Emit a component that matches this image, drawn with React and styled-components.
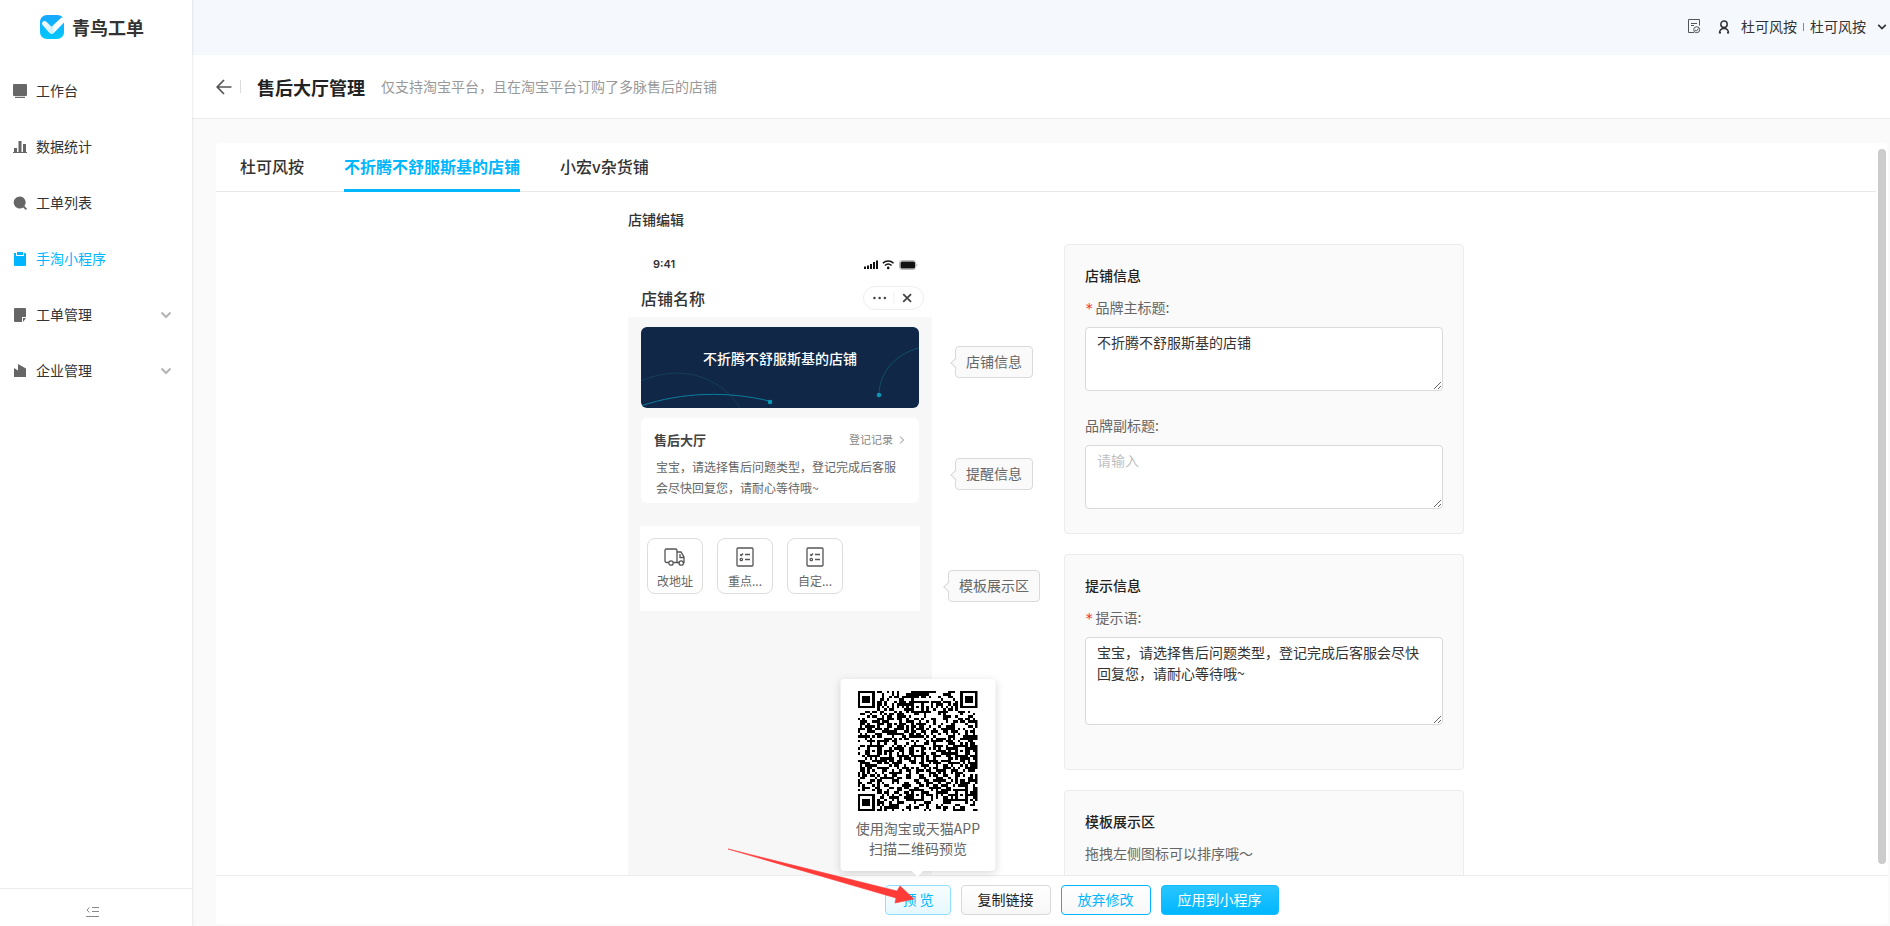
import React from 'react';
import styled, { createGlobalStyle, css } from 'styled-components';

const GlobalStyle = createGlobalStyle`
  * {
    box-sizing: border-box;
  }
  body {
    margin: 0;
    font-family: "Noto Sans CJK SC", "Noto Sans", sans-serif;
    font-size: 14px;
    line-height: 21px;
    color: #333;
    background: #fafafa;
  }
  button, textarea {
    font-family: inherit;
  }
  h1, h2, h3, p {
    margin: 0;
  }
`;

/* ---------- layout ---------- */

const Layout = styled.div`
  display: flex;
  height: 100vh;
  overflow: hidden;
`;

const Sidebar = styled.aside`
  display: flex;
  flex-direction: column;
  flex: 0 0 192px;
  background: #fff;
  box-shadow: 1px 0 2px rgba(0, 0, 0, 0.08);
  z-index: 1;
`;

const Main = styled.main`
  display: flex;
  flex-direction: column;
  flex: 1;
  min-width: 0;
`;

/* ---------- sidebar ---------- */

const Brand = styled.div`
  display: flex;
  align-items: center;
  gap: 8px;
  height: 54px;
  padding-left: 40px;
  font-size: 18px;
  font-weight: 600;
`;

const Menu = styled.nav`
  display: flex;
  flex-direction: column;
  flex: 1;
  padding-top: 9px;
`;

const MenuItem = styled.a`
  display: flex;
  align-items: center;
  gap: 8px;
  height: 56px;
  padding: 0 20px 0 13px;
  color: ${props => (props.$active ? '#00b7ff' : '#333')};
  text-decoration: none;

  svg {
    color: ${props => (props.$active ? '#00b7ff' : '#666')};
  }
  svg:last-child {
    color: #b4b4b4;
  }
`;

const MenuText = styled.span`
  flex: 1;
  padding-bottom: 2px;
`;

const Collapse = styled.button`
  display: flex;
  justify-content: center;
  height: 38px;
  padding: 17px 8px 0 0;
  border: 0;
  border-top: 1px solid #ececec;
  background: #fff;
  color: #888;
`;

/* ---------- header ---------- */

const TopBar = styled.header`
  display: flex;
  align-items: center;
  justify-content: flex-end;
  flex: 0 0 55px;
  padding: 0 3px 2px 0;
  background: #f5f9fd;
  color: #333;
`;

const IconButton = styled.button`
  display: flex;
  padding: 0;
  margin-right: ${props => props.$space || 0}px;
  border: 0;
  background: none;
  color: ${props => props.$color || '#555'};
`;

const UserSplit = styled.span`
  width: 1px;
  height: 8px;
  margin: 0 6px;
  background: #888;
`;

const UserName = styled.span`
  margin-right: ${props => (props.$last ? 11 : 0)}px;
`;

const PageHead = styled.div`
  display: flex;
  align-items: center;
  flex: 0 0 64px;
  padding-left: 24px;
  background: #fff;
  border-bottom: 1px solid #ebebeb;
`;

const HeadSplit = styled.span`
  width: 1px;
  height: 13px;
  margin-right: 16px;
  background: #ddd;
`;

const PageTitle = styled.h1`
  font-size: 18px;
  font-weight: 600;
  line-height: 24px;
  color: #222;
`;

const PageHint = styled.span`
  margin-left: 16px;
  color: #999;
`;

/* ---------- card ---------- */

const Card = styled.section`
  display: flex;
  flex-direction: column;
  flex: 1;
  min-height: 0;
  margin: 24px 2px 2px 24px;
  background: #fff;
  border-radius: 4px;
`;

const CardBody = styled.div`
  display: flex;
  flex: 1;
  min-height: 0;
`;

const ScrollArea = styled.div`
  display: flex;
  flex-direction: column;
  flex: 1;
  min-width: 0;
  overflow: hidden;
`;

const Rail = styled.div`
  flex: 0 0 12px;
  padding: 6px 2px 11px;
`;

const Thumb = styled.div`
  height: 100%;
  border-radius: 4px;
  background: #ccc;
`;

const Tabs = styled.div`
  display: flex;
  gap: 40px;
  flex: 0 0 49px;
  padding-left: 24px;
  border-bottom: 1px solid #e8e8e8;
`;

const Tab = styled.button`
  height: 49px;
  margin: 0 0 -1px;
  padding: 0;
  border: 0;
  border-bottom: 3px solid ${props => (props.$active ? '#00b7ff' : 'transparent')};
  background: none;
  font-size: 16px;
  font-weight: ${props => (props.$active ? 600 : 500)};
  color: ${props => (props.$active ? '#00b7ff' : '#333')};
`;

const Editor = styled.div`
  display: grid;
  grid-template-columns: 304px 124px 408px;
  justify-content: center;
  align-items: start;
  padding-top: 17px;
  row-gap: 14px;
`;

const EditorTitle = styled.h2`
  grid-column: 1 / -1;
  font-size: 14px;
  font-weight: 500;
`;

/* ---------- phone ---------- */

const Phone = styled.div`
  height: 760px;
  background: #f7f7f7;
`;

const PhoneHead = styled.div`
  height: 73px;
  padding: 10px 8px 0 13px;
  background: #fff;
`;

const StatusBar = styled.div`
  display: flex;
  align-items: center;
  justify-content: space-between;
  padding: 0 6px 0 12px;
  font-family: Inter, sans-serif;
  font-size: 11px;
  font-weight: 600;
`;

const NavBar = styled.div`
  display: flex;
  align-items: center;
  justify-content: space-between;
  margin-top: 11px;
  font-size: 16px;
  font-weight: 500;
`;

const Capsule = styled.div`
  display: flex;
  align-items: center;
  justify-content: space-between;
  width: 61px;
  height: 24px;
  padding: 0 10px 0 8px;
  border: 1px solid #eee;
  border-radius: 12px;
`;

const Hero = styled.div`
  position: relative;
  height: 81px;
  margin: 10px 13px 0;
  padding-top: 21px;
  border-radius: 6px;
  background: #102747;
  overflow: hidden;
  color: #fff;
  font-weight: 500;
  text-align: center;
`;

const HeroLines = styled.svg`
  position: absolute;
  left: 0;
  top: 0;
`;

const HallCard = styled.div`
  height: 85px;
  margin: 10px 13px 0;
  padding: 11px 14px 0 13px;
  border-radius: 6px;
  background: #fff;
`;

const HallHead = styled.div`
  display: flex;
  align-items: center;
`;

const HallTitle = styled.h3`
  flex: 1;
  font-size: 13px;
  font-weight: 600;
  color: #444;
`;

const HallLink = styled.a`
  display: flex;
  align-items: center;
  gap: 6px;
  color: #888;
  font-size: 11px;
  text-decoration: none;
`;

const HallText = styled.p`
  width: 244px;
  margin-top: 6px;
  padding-left: 2px;
  color: #666;
  font-size: 12px;
`;

const Tiles = styled.div`
  display: flex;
  gap: 14px;
  height: 85px;
  margin: 23px 12px 0;
  padding: 12px 7px;
  background: #fff;
`;

const Tile = styled.button`
  display: flex;
  flex-direction: column;
  align-items: center;
  justify-content: space-between;
  width: 56px;
  height: 56px;
  padding: 8px 2px 2px;
  border: 1px solid #ddd;
  border-radius: 8px;
  background: #fff;
  color: #666;
  font-size: 12px;
  line-height: 20px;
`;

/* ---------- labels between phone and forms ---------- */

const Marks = styled.div`
  display: flex;
  flex-direction: column;
  align-items: center;
  gap: 80px;
  padding-top: 102px;
`;

const Mark = styled.span`
  position: relative;
  height: 32px;
  padding: 0 10px;
  border: 1px solid #d9d9d9;
  border-radius: 4px;
  background: #fafafa;
  color: #666;
  line-height: 28px;

  &::before {
    content: '';
    position: absolute;
    left: -4px;
    top: 12px;
    width: 7px;
    height: 7px;
    border-left: 1px solid #d9d9d9;
    border-bottom: 1px solid #d9d9d9;
    background: #fafafa;
    transform: rotate(45deg);
  }
`;

/* ---------- forms ---------- */

const Forms = styled.div`
  display: flex;
  flex-direction: column;
  gap: 20px;
  margin-left: 8px;
`;

const Panel = styled.section`
  padding: 20px 20px 0;
  border: 1px solid #ececec;
  border-radius: 4px;
  background: #fafafa;
  min-height: ${props => props.$min || 0}px;
`;

const PanelTitle = styled.h3`
  margin-bottom: 12px;
  font-size: 14px;
  font-weight: 500;
  line-height: 20px;
  color: #222;
`;

const Field = styled.div`
  display: flex;
  flex-direction: column;
  gap: 10px;
  margin-bottom: 24px;
`;

const Label = styled.label`
  color: #666;
  line-height: 20px;

  ${props =>
    props.$required &&
    css`
      &::before {
        content: '*';
        margin-right: 2px;
        color: #f5222d;
        font-family: "DejaVu Sans Mono", monospace;
        line-height: 1;
      }
    `}
`;

const TextArea = styled.textarea`
  display: block;
  width: 100%;
  height: ${props => props.$height || 64}px;
  padding: 4px 11px;
  border: 1px solid #d9d9d9;
  border-radius: 4px;
  background: #fff;
  color: #333;
  font-size: 14px;
  line-height: 21px;
  resize: vertical;
  outline: none;

  &::placeholder {
    color: #bfbfbf;
  }
`;

const PanelText = styled.p`
  color: #666;
  line-height: 20px;
`;

/* ---------- footer ---------- */

const Footer = styled.footer`
  display: flex;
  align-items: flex-start;
  justify-content: center;
  gap: 10px;
  flex: 0 0 49px;
  padding: 9px 0 0 60px;
  border-top: 1px solid #ececec;
`;

const looks = {
  plain: css`
    border-color: #d9d9d9;
    background: linear-gradient(#fff, #f7f7f7);
    color: #222;
  `,
  hover: css`
    border-color: #8fdfff;
    background: linear-gradient(#f8fdff, #e6f8ff);
    color: #00b7ff;
  `,
  outline: css`
    border-color: #00b7ff;
    background: linear-gradient(#fff, #f7f7f7);
    color: #00b7ff;
  `,
  primary: css`
    border-color: #0fbcff;
    background: linear-gradient(#29c5ff, #00b7ff);
    color: #fff;
  `,
};

const Button = styled.button`
  height: 30px;
  padding: 0 16px 2px;
  border: 1px solid;
  border-radius: 4px;
  font-size: 14px;
  line-height: 20px;
  ${props => looks[props.$look]}
`;

const PreviewWrap = styled.div`
  position: relative;
  display: flex;
`;

const Popover = styled.div`
  position: absolute;
  left: 50%;
  bottom: 44px;
  display: flex;
  flex-direction: column;
  align-items: center;
  gap: 7px;
  width: 155px;
  height: 192px;
  padding-top: 12px;
  border-radius: 4px;
  background: #fff;
  box-shadow: 0 2px 8px rgba(0, 0, 0, 0.15);
  color: #666;
  line-height: 20px;
  text-align: center;
  transform: translateX(-50%);

  &::after {
    content: '';
    position: absolute;
    left: 50%;
    bottom: -4px;
    width: 8px;
    height: 8px;
    background: #fff;
    transform: translateX(-50%) rotate(45deg);
  }
`;

const Pointer = styled.svg`
  position: absolute;
  left: -158px;
  top: -37px;
  pointer-events: none;
`;

/* ---------- drawings ---------- */

const Logo = () => (
  <svg width="24" height="24" viewBox="0 0 24 24">
    <defs>
      <linearGradient id="logoBg" x1="0" y1="0" x2="0" y2="1">
        <stop offset="0" stopColor="#17a7ff" />
        <stop offset="1" stopColor="#00c8ff" />
      </linearGradient>
      <linearGradient id="logoTick" x1="0" y1="0" x2="1" y2="0">
        <stop offset="0" stopColor="#fff" />
        <stop offset="0.45" stopColor="#c9f0ff" />
        <stop offset="0.6" stopColor="#fff" />
      </linearGradient>
    </defs>
    <path d="M7 0h10c3 0 5 1 6 3l1 4v10c0 4-3 7-7 7H7c-4 0-7-3-7-7V7c0-4 3-7 7-7z" fill="url(#logoBg)" />
    <path d="M2.4 7.2c1-1.4 2.800-1.600 4-.4l5.200 5L21.500 2.600 24 3v4.500L13.800 18c-1.300 1.300-3 1.300-4.300 0L3 10.500c-.9-1-1.200-2.200-.6-3.300z" fill="url(#logoTick)" />
  </svg>
);

const menuShapes = {
  desk: <path d="M1 0h12a1 1 0 0 1 1 1v10a1 1 0 0 1-1 1H1a1 1 0 0 1-1-1V1a1 1 0 0 1 1-1zM2 12.800h10V14H2z" />,
  chart: <path d="M1 8h3v4H1zM5.500 1h3v11h-3zM10 4h3v8h-3zM0 12h14v1H0z" />,
  search: <path d="M6.500 0.500a6 6 0 0 1 4.900 9.600l2.600 2.700-1.200 1.200-2.600-2.600A6 6 0 1 1 6.500.5z" />,
  clip: <path d="M1 1h2v3h8V1h1a1 1 0 0 1 1 1v11a1 1 0 0 1-1 1H2a1 1 0 0 1-1-1zM4 0h6v3H4z" />,
  note: <path d="M2 0h10a1 1 0 0 1 1 1v8H9v5H2a1 1 0 0 1-1-1V1a1 1 0 0 1 1-1zM10 10h3l-3 4z" />,
  company: <path d="M1 4l4 2.500V0l8 4.500V13H1z" />,
};

const MenuIcon = ({ name }) => (
  <svg width="15" height="14" viewBox="0 0 15 14" fill="currentColor">
    {menuShapes[name]}
  </svg>
);

const Chevron = ({ size = 12, width = 2 }) => (
  <svg width={size} height={size} viewBox="0 0 12 12" fill="none" stroke="currentColor" strokeWidth={width}>
    <path d="M1.500 3.500L6 8l4.500-4.500" />
  </svg>
);

const RecordIcon = () => (
  <svg width="13" height="15" viewBox="0 0 13 15" fill="none" stroke="currentColor">
    <path d="M6 13.500H.5V.5h11v6M3 4.500h6M3 6.500h3" />
    <circle cx="8.700" cy="10.700" r="3" />
    <path d="M7 11l1.500 1 2-2.500" />
  </svg>
);

const UserIcon = () => (
  <svg width="12" height="14" viewBox="0 0 12 14" fill="none" stroke="currentColor" strokeWidth="1.500">
    <circle cx="6" cy="4.200" r="3.200" />
    <path d="M1.500 13.500c0-2.800 1.700-5 4.500-5s4.500 2.200 4.500 5M1 12.700h2M9 12.700h2" />
  </svg>
);

const BackIcon = () => (
  <svg width="16" height="16" viewBox="0 0 16 16" fill="none" stroke="currentColor" strokeWidth="1.700">
    <path d="M15.500 8H1.500M8 1L1.200 8 8 15" />
  </svg>
);

const FoldIcon = () => (
  <svg width="13" height="12" viewBox="0 0 13 12" fill="none" stroke="currentColor">
    <path d="M6 1.500h7M6 5.500h7M0 10.500h13" />
    <path d="M3.500 1.500L1 4l2.500 2.500" />
  </svg>
);

const StatusIcons = () => (
  <svg width="54" height="10" viewBox="0 0 54 10" fill="#111">
    <path d="M0 6.500h2V9H0zM3 5.500h2V9H3zM6 4h2v5H6zM9 2h2v7H9zM12 .5h2V9h-2z" />
    <g fill="none" stroke="#111" strokeWidth="1.400">
      <path d="M18.800 3.300c3-3 7.800-3 10.800 0M20.900 5.500c2-1.800 4.700-1.800 6.700 0" />
    </g>
    <circle cx="24.200" cy="7.900" r="1.300" />
    <rect x="35.500" y=".5" width="16" height="9" rx="2.500" fill="none" stroke="#bbb" />
    <rect x="36.500" y="1.500" width="14.500" height="7" rx="1.500" />
    <path d="M52.500 3.500c1.200.5 1.200 2.500 0 3z" fill="#aaa" />
  </svg>
);

const CapsuleIcons = () => (
  <svg width="42" height="12" viewBox="0 0 42 12" fill="#444">
    <circle cx="2.500" cy="6" r="1.300" />
    <circle cx="7.800" cy="6" r="1.300" />
    <circle cx="13.200" cy="6" r="1.300" />
    <path d="M22.500 0v12" stroke="#eee" />
    <path d="M32 2l8 8M40 2l-8 8" stroke="#444" strokeWidth="1.800" />
  </svg>
);

const TruckIcon = () => (
  <svg width="22" height="20" viewBox="0 0 22 20" fill="none" stroke="#555" strokeWidth="1.300">
    <path d="M4.500 15.500H2.500a1.500 1.500 0 0 1-1.500-1.500V3.500A1.500 1.500 0 0 1 2.500 2h9A1.500 1.500 0 0 1 13 3.500v12H9.500" />
    <path d="M13 5h4l3 5v5.500h-1M15.500 15.500H13M16 7v3.500h4.500" />
    <circle cx="7" cy="16" r="2.200" />
    <circle cx="17.200" cy="16" r="2.200" />
  </svg>
);

const FormIcon = () => (
  <svg width="18" height="20" viewBox="0 0 18 20" fill="none" stroke="#555" strokeWidth="1.300">
    <rect x="1" y="1" width="16" height="18" rx="1" />
    <path d="M4 7.500l1.200 1L7 6.500M9 7.500h5M9 12.500h5" />
    <circle cx="5.300" cy="12.500" r="1.200" />
  </svg>
);

const QR_SIZE = 49;
const ALIGN = [6, 24, 42];

// true/false for fixed patterns, null for data modules
const fixedModule = (x, y) => {
  const corners = [[0, 0], [QR_SIZE - 7, 0], [0, QR_SIZE - 7]];
  for (const [cx, cy] of corners) {
    const d = Math.max(Math.abs(x - cx - 3), Math.abs(y - cy - 3));
    if (d <= 4) return d !== 2 && d !== 4;
  }
  for (const ax of ALIGN) {
    for (const ay of ALIGN) {
      const d = Math.max(Math.abs(x - ax), Math.abs(y - ay));
      const corner = (ax === 6 && ay !== 24) || (ay === 6 && ax === 42);
      if (!corner && d <= 2) return d !== 1;
    }
  }
  if (x === 6 || y === 6) return (x + y) % 2 === 0;
  return null;
};

const buildQr = () => {
  let seed = 20517;
  let d = '';
  for (let y = 0; y < QR_SIZE; y++) {
    for (let x = 0; x < QR_SIZE; x++) {
      seed = (seed * 1103515 + 12345) % 2147483647;
      const fixed = fixedModule(x, y);
      if (fixed === null ? seed % 1000 < 500 : fixed) d += `M${x} ${y}h1v1h-1z`;
    }
  }
  return d;
};

const qrPath = buildQr();

const QrCode = () => (
  <svg width="120" height="120" viewBox={`0 0 ${QR_SIZE} ${QR_SIZE}`} shapeRendering="crispEdges">
    <path d={qrPath} fill="#000" />
  </svg>
);

/* ---------- data ---------- */

const menu = [
  { icon: 'desk', text: '工作台' },
  { icon: 'chart', text: '数据统计' },
  { icon: 'search', text: '工单列表' },
  { icon: 'clip', text: '手淘小程序', active: true },
  { icon: 'note', text: '工单管理', sub: true },
  { icon: 'company', text: '企业管理', sub: true },
];

const shops = ['杜可风按', '不折腾不舒服斯基的店铺', '小宏v杂货铺'];
const shopName = shops[1];
const tip = '宝宝，请选择售后问题类型，登记完成后客服会尽快回复您，请耐心等待哦~';

/* ---------- parts ---------- */

const PhonePreview = () => (
  <Phone>
    <PhoneHead>
      <StatusBar>
        9:41
        <StatusIcons />
      </StatusBar>
      <NavBar>
        店铺名称
        <Capsule>
          <CapsuleIcons />
        </Capsule>
      </NavBar>
    </PhoneHead>
    <Hero>
      {shopName}
      <HeroLines width="278" height="81" viewBox="0 0 278 81" fill="none">
        <path d="M0 54c36-16 77-8 99 27" stroke="#153e5c" />
        <path d="M0 79c40-14 88-15 128-5" stroke="#0d7e9c" />
        <path d="M238 68c0-22 16-41 40-47" stroke="#11506a" />
        <circle cx="129" cy="75" r="2.300" fill="#0a97b5" />
        <circle cx="238" cy="68" r="2.300" fill="#0a97b5" />
      </HeroLines>
    </Hero>
    <HallCard>
      <HallHead>
        <HallTitle>售后大厅</HallTitle>
        <HallLink href="#">
          登记记录
          <svg width="6" height="8" viewBox="0 0 6 8" fill="none" stroke="currentColor">
            <path d="M1 .5L4.500 4 1 7.500" />
          </svg>
        </HallLink>
      </HallHead>
      <HallText>{tip}</HallText>
    </HallCard>
    <Tiles>
      <Tile>
        <TruckIcon />
        改地址
      </Tile>
      <Tile>
        <FormIcon />
        重点...
      </Tile>
      <Tile>
        <FormIcon />
        自定...
      </Tile>
    </Tiles>
  </Phone>
);

const ShopForms = () => (
  <Forms>
    <Panel>
      <PanelTitle>店铺信息</PanelTitle>
      <Field>
        <Label htmlFor="mainTitle" $required>品牌主标题:</Label>
        <TextArea id="mainTitle" defaultValue={shopName} />
      </Field>
      <Field>
        <Label htmlFor="subTitle">品牌副标题:</Label>
        <TextArea id="subTitle" placeholder="请输入" />
      </Field>
    </Panel>
    <Panel $min={216}>
      <PanelTitle>提示信息</PanelTitle>
      <Field>
        <Label htmlFor="tip" $required>提示语:</Label>
        <TextArea id="tip" $height={88} defaultValue={tip} />
      </Field>
    </Panel>
    <Panel $min={214}>
      <PanelTitle>模板展示区</PanelTitle>
      <PanelText>拖拽左侧图标可以排序哦～</PanelText>
    </Panel>
  </Forms>
);

const App = () => (
  <Layout>
    <GlobalStyle />
    <Sidebar>
      <Brand>
        <Logo />
        青鸟工单
      </Brand>
      <Menu>
        {menu.map(item => (
          <MenuItem key={item.text} href="#" $active={item.active}>
            <MenuIcon name={item.icon} />
            <MenuText>{item.text}</MenuText>
            {item.sub && <Chevron />}
          </MenuItem>
        ))}
      </Menu>
      <Collapse aria-label="收起菜单">
        <FoldIcon />
      </Collapse>
    </Sidebar>
    <Main>
      <TopBar>
        <IconButton $space={17} aria-label="记录">
          <RecordIcon />
        </IconButton>
        <IconButton $space={11} $color="#333" aria-label="用户">
          <UserIcon />
        </IconButton>
        <UserName>杜可风按</UserName>
        <UserSplit />
        <UserName $last>杜可风按</UserName>
        <Chevron size={10} />
      </TopBar>
      <PageHead>
        <IconButton $space={8} aria-label="返回">
          <BackIcon />
        </IconButton>
        <HeadSplit />
        <PageTitle>售后大厅管理</PageTitle>
        <PageHint>仅支持淘宝平台，且在淘宝平台订购了多脉售后的店铺</PageHint>
      </PageHead>
      <Card>
        <CardBody>
          <ScrollArea>
            <Tabs>
              {shops.map(shop => (
                <Tab key={shop} $active={shop === shopName}>{shop}</Tab>
              ))}
            </Tabs>
            <Editor>
              <EditorTitle>店铺编辑</EditorTitle>
              <PhonePreview />
              <Marks>
                <Mark>店铺信息</Mark>
                <Mark>提醒信息</Mark>
                <Mark>模板展示区</Mark>
              </Marks>
              <ShopForms />
            </Editor>
          </ScrollArea>
          <Rail>
            <Thumb />
          </Rail>
        </CardBody>
        <Footer>
          <PreviewWrap>
            <Button $look="hover">预 览</Button>
            <Popover>
              <QrCode />
              <div>
                使用淘宝或天猫APP
                <br />
                扫描二维码预览
              </div>
            </Popover>
            <Pointer width="190" height="60" viewBox="0 0 190 60">
              <path d="M1 1l169 42 3-5 14 13-19 4 1-5z" fill="#ff3b38" stroke="#ff3b38" strokeWidth=".6" />
            </Pointer>
          </PreviewWrap>
          <Button $look="plain">复制链接</Button>
          <Button $look="outline">放弃修改</Button>
          <Button $look="primary">应用到小程序</Button>
        </Footer>
      </Card>
    </Main>
  </Layout>
);

export default App;
